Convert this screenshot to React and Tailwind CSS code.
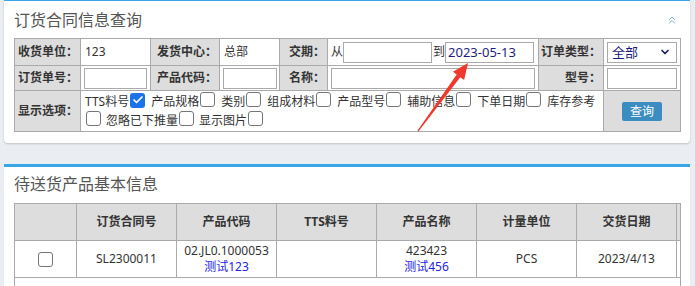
import { ChevronDown, ChevronsUp, Check } from 'lucide-react'

const cell = 'border border-[#aaa] p-0 align-middle'
const label = `${cell} bg-[#ddd] font-bold text-right pr-[2px] text-[#333]`

function Box({ checked }) {
  if (checked) {
    return (
      <span className="inline-flex items-center justify-center w-[15px] h-[15px] rounded-[3px] bg-[#1a73e8] shrink-0">
        <Check className="w-[12px] h-[12px] text-white" strokeWidth={3.5} />
      </span>
    )
  }
  return <span className="inline-block w-[15px] h-[15px] rounded-[3px] border border-[#767676] bg-white shrink-0" />
}

function Opt({ text, checked }) {
  return (
    <span className="flex items-center mr-[6px]">
      <span>{text}</span>
      <span className="ml-[1px]"><Box checked={checked} /></span>
    </span>
  )
}

const line1 = [
  ['TTS料号', true],
  ['产品规格'],
  ['类别'],
  ['组成材料'],
  ['产品型号'],
  ['辅助信息'],
  ['下单日期'],
]

const cols2 = ['订货合同号', '产品代码', 'TTS料号', '产品名称', '计量单位', '交货日期']

export default function App() {
  return (
    <div className="relative w-[695px] h-[286px] overflow-hidden bg-[#eaedf1] text-[12px] text-[#333] font-['Noto_Sans','Noto_Sans_CJK_SC',sans-serif]">
      {/* query panel */}
      <div className="ml-[4px] w-[686px] bg-white border-t border-[#39a7e6] rounded-b-[4px] shadow-[0_1px_2px_rgba(0,0,0,0.18)] px-[10px] pt-[8px] pb-[11px]">
        <div className="flex items-center justify-between h-[22px]">
          <span className="text-[16px] leading-[22px] text-[#555]">订货合同信息查询</span>
          <ChevronsUp className="w-[12px] h-[12px] text-[#6fa6da] mr-[2px]" strokeWidth={1.8} />
        </div>
        <table className="mt-[7px] table-fixed border-collapse w-[666px] leading-[16px]">
          <colgroup>
            <col className="w-[66px]" />
            <col className="w-[70px]" />
            <col className="w-[69px]" />
            <col className="w-[60px]" />
            <col className="w-[48px]" />
            <col className="w-[211px]" />
            <col className="w-[65px]" />
            <col className="w-[77px]" />
          </colgroup>
          <tbody>
            <tr className="h-[27px]">
              <td className={label}>收货单位：</td>
              <td className={`${cell} pl-[4px]`}>123</td>
              <td className={label}>发货中心：</td>
              <td className={`${cell} pl-[4px]`}>总部</td>
              <td className={label}>交期：</td>
              <td className={`${cell} pl-[3px]`}>
                <div className="flex items-center">
                  <span>从</span>
                  <span className="w-[89px] h-[21px] border border-[#aaa]" />
                  <span className="ml-[1px]">到</span>
                  <span className="w-[89px] h-[21px] border border-[#aaa] pl-[2px] text-[13px] leading-[19px] text-[#1d1d80]">2023-05-13</span>
                </div>
              </td>
              <td className={label}>订单类型：</td>
              <td className={`${cell} pl-[3px]`}>
                <div className="flex items-center justify-between w-[70px] h-[21px] border border-[#aaa] pl-[4px] pr-[5px] text-[13px] text-[#1d1d80]">
                  <span>全部</span>
                  <ChevronDown className="w-[12px] h-[12px] text-[#1d1d60]" strokeWidth={3.5} />
                </div>
              </td>
            </tr>
            <tr className="h-[25px]">
              <td className={label}>订货单号：</td>
              <td className={`${cell} pl-[3px]`}><div className="w-[63px] h-[21px] border border-[#aaa]" /></td>
              <td className={label}>产品代码：</td>
              <td className={`${cell} pl-[3px]`}><div className="w-[54px] h-[21px] border border-[#aaa]" /></td>
              <td className={label}>名称：</td>
              <td className={`${cell} pl-[3px]`}><div className="w-[204px] h-[21px] border border-[#aaa]" /></td>
              <td className={label}>型号：</td>
              <td className={`${cell} pl-[3px]`}><div className="w-[70px] h-[21px] border border-[#aaa]" /></td>
            </tr>
            <tr className="h-[41px]">
              <td className={label}>显示选项：</td>
              <td colSpan={6} className={`${cell} pl-[4px]`}>
                <div className="flex items-center h-[19px] leading-[19px]">
                  {line1.map(([t, c]) => <Opt key={t} text={t} checked={c} />)}
                  <span>库存参考</span>
                </div>
                <div className="flex items-center h-[19px] leading-[19px]">
                  <span className="ml-[1px] mr-[5px]"><Box /></span>
                  <span>忽略已下推量</span>
                  <span className="ml-[1px] mr-[5px]"><Box /></span>
                  <span>显示图片</span>
                  <span className="ml-[1px]"><Box /></span>
                </div>
              </td>
              <td className={`${cell} bg-[#ddd] text-center`}>
                <button className="w-[40px] h-[19px] rounded-[2px] bg-[#3a8cc1] text-white text-[12px] leading-[19px]">查询</button>
              </td>
            </tr>
          </tbody>
        </table>
      </div>

      {/* result panel */}
      <div className="mt-[21px] ml-[4px] w-[686px] h-[130px] bg-white border-t-[3px] border-[#39a7e6] px-[10px] pt-[6px]">
        <div className="text-[16px] leading-[22px] text-[#555]">待送货产品基本信息</div>
        <div className="mt-[8px] w-[667px] h-[100px] overflow-hidden border-l border-r border-[#aaa]">
          <table className="table-fixed border-collapse w-[666px] leading-[16px] -ml-[1px]">
            <colgroup>
              <col className="w-[62px]" />
              <col className="w-[100px]" />
              <col className="w-[100px]" />
              <col className="w-[100px]" />
              <col className="w-[100px]" />
              <col className="w-[100px]" />
              <col className="w-[100px]" />
              <col className="w-[5px]" />
            </colgroup>
            <tbody>
              <tr className="h-[37px] bg-[#ddd] font-bold">
                <td className={cell}></td>
                {cols2.map((c) => (
                  <td key={c} className={`${cell} text-center`}>{c}</td>
                ))}
                <td className={cell}></td>
              </tr>
              <tr className="h-[37px] text-center">
                <td className={cell}><span className="inline-flex align-middle"><Box /></span></td>
                <td className={cell}>SL2300011</td>
                <td className={cell}>
                  <div>02.JL0.1000053</div>
                  <div className="text-[#2424e6]">测试123</div>
                </td>
                <td className={cell}></td>
                <td className={cell}>
                  <div>423423</div>
                  <div className="text-[#2424e6]">测试456</div>
                </td>
                <td className={cell}>PCS</td>
                <td className={cell}>2023/4/13</td>
                <td className={cell}></td>
              </tr>
            </tbody>
          </table>
        </div>
      </div>

      {/* annotation arrow */}
      <svg className="absolute left-0 top-0 pointer-events-none" width="695" height="286" viewBox="0 0 695 286">
        <polygon
          points="468,63 464.1,80 460.3,77.2 418.6,131.3 417.4,130.7 456.7,74.6 452.9,71.8"
          fill="#f0382b"
        />
      </svg>
    </div>
  )
}
